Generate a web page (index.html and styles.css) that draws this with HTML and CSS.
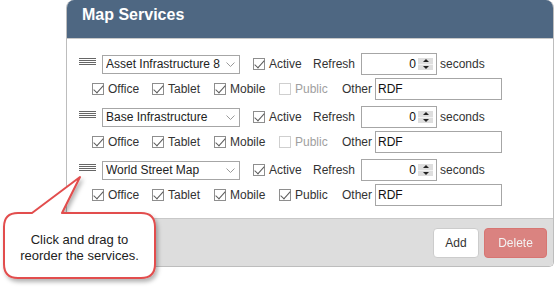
FILE: index.html
```html
<!DOCTYPE html>
<html lang="en">
  <head>
    <meta charset="UTF-8" />
    <meta name="viewport" content="width=device-width, initial-scale=1.0" />
    <title>Map Services</title>
    <link rel="stylesheet" href="styles.css">
  </head>
  <body>
    <div class="page">
      <div class="panel">
        <div class="panel-head">Map Services</div>
        <div class="panel-body">
          <div class="service">
            <div class="line">
              <svg class="handle" width="17" height="8" viewBox="0 0 17 8"><path d="M0 .5h17M0 2.5h17M0 4.5h17M0 6.5h17" stroke="#666" /></svg>
              <div class="select"><span>Asset Infrastructure 8</span><svg width="9" height="5" viewBox="0 0 9 5"><path d="M.5 .5l4 4 4-4" fill="none" stroke="#9a9a9a" /></svg></div>
              <label class="check w-active"><span class="box on"></span>Active</label>
              <span class="lbl w-refresh">Refresh</span>
              <div class="number"><span>0</span><span class="spin"><i class="up"></i><i class="down"></i></span></div>
              <span class="lbl seconds">seconds</span>
            </div>
            <div class="line opts">
              <label class="check w-office"><span class="box on"></span>Office</label>
              <label class="check w-tablet"><span class="box on"></span>Tablet</label>
              <label class="check w-mobile"><span class="box on"></span>Mobile</label>
              <label class="check w-public off"><span class="box"></span>Public</label>
              <span class="lbl w-other">Other</span>
              <div class="text">RDF</div>
            </div>
          </div>
          <div class="service">
            <div class="line">
              <svg class="handle" width="17" height="8" viewBox="0 0 17 8"><path d="M0 .5h17M0 2.5h17M0 4.5h17M0 6.5h17" stroke="#666" /></svg>
              <div class="select"><span>Base Infrastructure</span><svg width="9" height="5" viewBox="0 0 9 5"><path d="M.5 .5l4 4 4-4" fill="none" stroke="#9a9a9a" /></svg></div>
              <label class="check w-active"><span class="box on"></span>Active</label>
              <span class="lbl w-refresh">Refresh</span>
              <div class="number"><span>0</span><span class="spin"><i class="up"></i><i class="down"></i></span></div>
              <span class="lbl seconds">seconds</span>
            </div>
            <div class="line opts">
              <label class="check w-office"><span class="box on"></span>Office</label>
              <label class="check w-tablet"><span class="box on"></span>Tablet</label>
              <label class="check w-mobile"><span class="box on"></span>Mobile</label>
              <label class="check w-public off"><span class="box"></span>Public</label>
              <span class="lbl w-other">Other</span>
              <div class="text">RDF</div>
            </div>
          </div>
          <div class="service">
            <div class="line">
              <svg class="handle" width="17" height="8" viewBox="0 0 17 8"><path d="M0 .5h17M0 2.5h17M0 4.5h17M0 6.5h17" stroke="#666" /></svg>
              <div class="select"><span>World Street Map</span><svg width="9" height="5" viewBox="0 0 9 5"><path d="M.5 .5l4 4 4-4" fill="none" stroke="#9a9a9a" /></svg></div>
              <label class="check w-active"><span class="box on"></span>Active</label>
              <span class="lbl w-refresh">Refresh</span>
              <div class="number"><span>0</span><span class="spin"><i class="up"></i><i class="down"></i></span></div>
              <span class="lbl seconds">seconds</span>
            </div>
            <div class="line opts">
              <label class="check w-office"><span class="box on"></span>Office</label>
              <label class="check w-tablet"><span class="box on"></span>Tablet</label>
              <label class="check w-mobile"><span class="box on"></span>Mobile</label>
              <label class="check w-public"><span class="box on"></span>Public</label>
              <span class="lbl w-other">Other</span>
              <div class="text">RDF</div>
            </div>
          </div>
        </div>
        <div class="panel-foot">
          <button class="btn btn-add">Add</button>
          <button class="btn btn-delete" disabled>Delete</button>
        </div>
      </div>

      <div class="callout">
        <svg width="165" height="120" viewBox="0 170 165 120">
          <defs>
            <filter id="shade" x="-10%" y="-10%" width="130%" height="130%">
              <feDropShadow dx="2" dy="3" stdDeviation="2" flood-color="#000" flood-opacity="0.3" />
            </filter>
          </defs>
          <path d="M18 213H32L80 177L62 213H141Q155 213 155 227V264Q155 278 141 278H18Q4 278 4 264V227Q4 213 18 213Z" fill="#fff" stroke="#e24d4d" stroke-width="2" stroke-linejoin="round" filter="url(#shade)" />
        </svg>
        <div class="callout-text">Click and drag to<br />reorder the services.</div>
      </div>
    </div>
  </body>
</html>
```

FILE: styles.css
```css
* {
  box-sizing: border-box;
}

body {
  margin: 0;
  font-family: "Liberation Sans", Arial, sans-serif;
  font-size: 12px;
  color: #333;
  background: #fff;
}

.page {
  position: relative;
  width: 555px;
  height: 290px;
  padding-left: 66px;
}

.panel {
  width: 488px;
  border: 1px solid #bdbdbd;
  border-top: 0;
  border-radius: 8px 8px 5px 5px;
  overflow: hidden;
}

.panel-head {
  height: 39px;
  padding: 6px 0 0 15px;
  background: #4e6782;
  border-bottom: 1px solid #c8c8c8;
  color: #fff;
  font-size: 16px;
  font-weight: bold;
  line-height: 18px;
}

.panel-body {
  padding: 14px 0 12px 12px;
  background: #fff;
}

.service + .service {
  margin-top: 6px;
}

.line {
  display: flex;
  align-items: center;
  height: 22px;
  white-space: nowrap;
}

.opts {
  margin-top: 3px;
  padding-left: 13px;
}

.handle {
  flex: none;
  align-self: flex-start;
  margin: 5px 6px 0 0;
}

.select {
  display: flex;
  align-items: center;
  width: 138px;
  height: 19px;
  padding: 0 4px 0 3px;
  border: 1px solid #a6a6a6;
  background: #fff;
  color: #222;
}

.select span {
  flex: 1;
  overflow: hidden;
}

.check {
  display: flex;
  align-items: center;
  flex: none;
}

.box {
  position: relative;
  flex: none;
  width: 12px;
  height: 12px;
  margin-right: 4px;
  border: 1px solid #8e8e8e;
  background: #fff;
}

.box.on::after {
  content: "";
  position: absolute;
  left: 3px;
  top: -1px;
  width: 4px;
  height: 9px;
  border: solid #5c5c5c;
  border-width: 0 1.5px 1.5px 0;
  transform: rotate(42deg);
}

.check.off {
  color: #a0a0a0;
}

.check.off .box {
  border-color: #cfcfcf;
}

.w-active {
  width: 60px;
  margin-left: 13px;
}

.w-refresh {
  width: 48px;
}

.w-office {
  width: 60px;
}

.w-tablet {
  width: 62px;
}

.w-mobile {
  width: 65px;
}

.w-public {
  width: 63px;
}

.w-other {
  width: 33px;
}

.seconds {
  margin-left: 3px;
}

.number {
  display: flex;
  align-items: center;
  justify-content: flex-end;
  width: 76px;
  height: 22px;
  padding-right: 3px;
  border: 1px solid #a6a6a6;
  color: #111;
}

.spin {
  display: flex;
  flex-direction: column;
  width: 15px;
  height: 12px;
  margin-left: 2px;
  background: #dedede;
}

.spin i {
  display: flex;
  flex: 1;
  align-items: center;
  justify-content: center;
}

.spin .up {
  border-bottom: 1px solid #f2f2f2;
}

.spin .up::before,
.spin .down::before {
  content: "";
  border-left: 3px solid transparent;
  border-right: 3px solid transparent;
}

.spin .up::before {
  border-bottom: 3px solid #222;
}

.spin .down::before {
  border-top: 3px solid #222;
}

.text {
  width: 127px;
  height: 22px;
  padding-left: 2px;
  border: 1px solid #a6a6a6;
  color: #111;
  line-height: 20px;
}

.panel-foot {
  display: flex;
  justify-content: flex-end;
  gap: 5px;
  padding: 9px 6px 8px;
  background: #dddddd;
  border-top: 1px solid #c8c8c8;
}

.btn {
  height: 30px;
  padding: 0;
  border: 1px solid #ccc;
  border-radius: 4px;
  font-family: inherit;
  font-size: 12px;
  line-height: 16px;
}

.btn-add {
  width: 46px;
  background: #fff;
  color: #333;
}

.btn-delete {
  width: 63px;
  background: #d9534f;
  border-color: #d43f3a;
  color: #fff;
  opacity: 0.65;
}

.callout {
  position: absolute;
  left: 0;
  top: 170px;
  width: 165px;
  height: 120px;
}

.callout svg {
  position: absolute;
  left: 0;
  top: 0;
}

.callout-text {
  position: absolute;
  left: 4px;
  top: 62px;
  width: 151px;
  color: #222;
  font-size: 13px;
  line-height: 16px;
  text-align: center;
}
```
